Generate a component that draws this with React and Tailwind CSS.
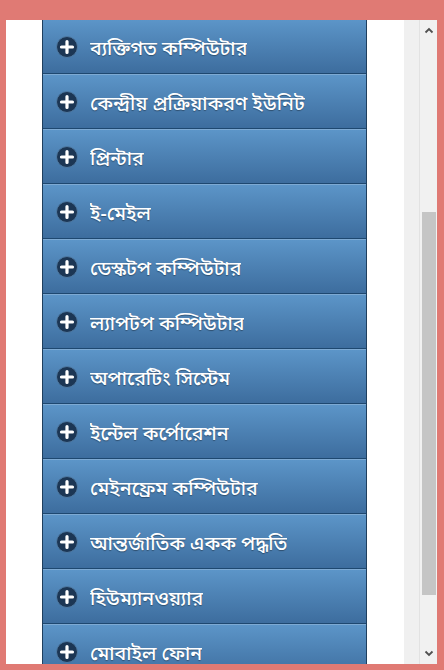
import React from "react";

const items = [
  "ব্যক্তিগত কম্পিউটার",
  "কেন্দ্রীয় প্রক্রিয়াকরণ ইউনিট",
  "প্রিন্টার",
  "ই-মেইল",
  "ডেস্কটপ কম্পিউটার",
  "ল্যাপটপ কম্পিউটার",
  "অপারেটিং সিস্টেম",
  "ইন্টেল কর্পোরেশন",
  "মেইনফ্রেম কম্পিউটার",
  "আন্তর্জাতিক একক পদ্ধতি",
  "হিউম্যানওয়্যার",
  "মোবাইল ফোন",
];

function PlusIcon() {
  return (
    <svg width="22" height="22" viewBox="0 0 22 22" className="shrink-0">
      <circle cx="11" cy="11" r="10.5" fill="#1c3654" stroke="#4f7aa3" strokeWidth="1" />
      <path d="M11 5.5v11M5.5 11h11" stroke="#ffffff" strokeWidth="3.2" strokeLinecap="round" />
    </svg>
  );
}

function Chevron({ up }) {
  return (
    <svg width="10" height="7" viewBox="0 0 10 7">
      <path
        d={up ? "M1.5 5.5L5 2l3.5 3.5" : "M1.5 1.5L5 5l3.5-3.5"}
        fill="none"
        stroke="#505050"
        strokeWidth="1.8"
      />
    </svg>
  );
}

export default function App() {
  return (
    <div className="h-[670px] w-[444px] overflow-hidden bg-[#e07a74] pt-[20px] pb-[6px] pl-[6px] pr-[7px]">
      <div className="flex h-full bg-white">
        <div className="flex-1 overflow-hidden pl-[36px] pr-[37px]">
          <ul
            className="-mt-px border-x border-[#1f3f5e]"
            style={{ fontFamily: '"Noto Sans Bengali", "Noto Sans", sans-serif' }}
          >
            {items.map((label) => (
              <li
                key={label}
                className="flex h-[55px] items-center gap-[12px] border-t border-t-[#7eaad3] border-b border-b-[#1e4870] bg-gradient-to-b from-[#5c95c8] to-[#3d6d9e] pl-[13px] text-[19.5px] font-medium text-white [text-shadow:0_1px_1px_rgba(0,0,0,0.35)]"
              >
                <PlusIcon />
                <span className="truncate pt-[6px] leading-[28px]">{label}</span>
              </li>
            ))}
          </ul>
        </div>
        <div className="w-[16px] bg-[#f0f0f0] border-r border-[#e2e2e2]" />
        <div className="flex w-[17px] flex-col items-center bg-[#f1f1f1]">
          <div className="flex h-[17px] items-center justify-center pt-[3px]">
            <Chevron up />
          </div>
          <div className="mt-[175px] h-[383px] w-[14px] bg-[#c5c5c5]" />
          <div className="flex-1" />
          <div className="flex h-[17px] items-center justify-center pb-[4px]">
            <Chevron />
          </div>
        </div>
      </div>
    </div>
  );
}
